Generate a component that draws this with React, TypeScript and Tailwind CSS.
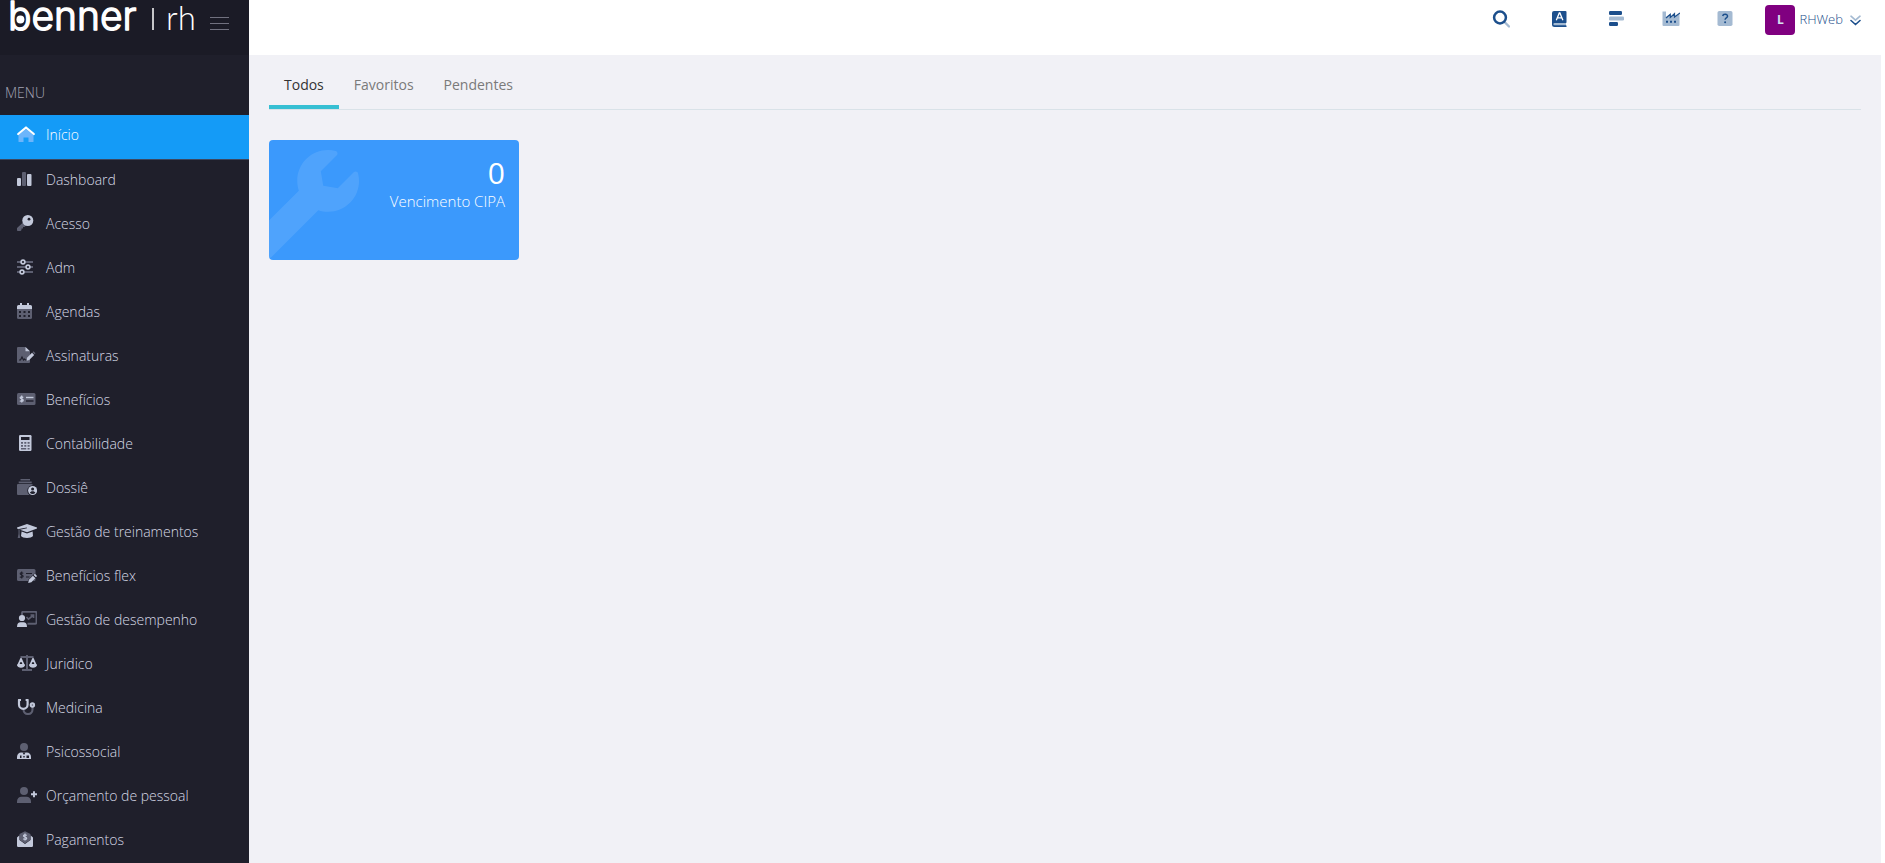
import React from 'react';
import { FaWrench } from 'react-icons/fa';

const LIGHT = '#c3c9db';
const DIM = '#5d5f71';
const DARK = '#1f1f2b';
const NAVY = '#1c4f8c';
const STEEL = '#a4bad2';

const MenuIcon = ({ children }: { children: React.ReactNode }) => (
  <svg className="h-4 w-5 shrink-0" viewBox="0 0 20 16" fill="none" aria-hidden="true">
    {children}
  </svg>
);

const menuItems = [
  {
    label: 'Início',
    icon: (
      <>
        <path d="M1.5 9 9 3l7.500 6v6.500a.5.500 0 0 1-.5.500h-4.500v-4.500h-5V16H2a.5.500 0 0 1-.5-.5z" fill="#6cb5fb" />
        <path d="M1.200 8 9 1.500 16.800 8" stroke="#fff" strokeWidth="2.200" strokeLinecap="round" strokeLinejoin="round" />
      </>
    ),
  },
  {
    label: 'Dashboard',
    icon: (
      <>
        <rect x="0" y="7" width="4" height="8" rx="1" fill={LIGHT} />
        <rect x="5" y="1" width="4" height="14" rx="1" fill={DIM} />
        <rect x="10" y="3" width="4.500" height="12" rx="1" fill={LIGHT} />
      </>
    ),
  },
  {
    label: 'Acesso',
    icon: (
      <>
        <path d="M6 7.500 9 10.500 7.500 12H6v1.500H4.500V15L3.500 16H.8a.8.800 0 0 1-.8-.8v-2.200z" fill={DIM} />
        <circle cx="10.800" cy="5.500" r="5.500" fill={LIGHT} />
        <circle cx="12" cy="4.200" r="1.400" fill={DARK} />
      </>
    ),
  },
  {
    label: 'Adm',
    icon: (
      <>
        <path d="M0 3h16M0 8h16M0 13h16" stroke={DIM} strokeWidth="2" />
        <g fill={DARK} stroke={LIGHT} strokeWidth="1.600">
          <circle cx="6" cy="3" r="1.900" />
          <circle cx="11" cy="8" r="1.900" />
          <circle cx="5" cy="13" r="1.900" />
        </g>
      </>
    ),
  },
  {
    label: 'Agendas',
    icon: (
      <>
        <path d="M0 6h15v8.500a1.500 1.500 0 0 1-1.500 1.500h-12A1.500 1.500 0 0 1 0 14.500z" fill={DIM} />
        <path d="M0 6V3.500A1.500 1.500 0 0 1 1.500 2H3V0h2v2h5V0h2v2h1.500A1.500 1.500 0 0 1 15 3.500V6z" fill={LIGHT} />
        <path d="M2 8h2v2H2zM6.500 8h2v2h-2zM11 8h2v2h-2zM2 12h2v2H2zM6.500 12h2v2h-2zM11 12h2v2h-2z" fill={DARK} />
      </>
    ),
  },
  {
    label: 'Assinaturas',
    icon: (
      <>
        <path d="M1 0h7.500L13 4.500V15a1 1 0 0 1-1 1H1a1 1 0 0 1-1-1V1a1 1 0 0 1 1-1z" fill={DIM} />
        <path d="M8.500 0 13 4.200H8.500z" fill={LIGHT} />
        <path d="M2 13h1.500l1.500-3 1.500 3 1-1 1 1H10" stroke={DARK} strokeWidth="1.200" />
        <path d="m9.500 13.800.5-3 5-5 2.200 2.200-5 5z" fill={LIGHT} />
        <path d="m15.500 5.200 1-1 2 2-1 1z" fill={DIM} />
      </>
    ),
  },
  {
    label: 'Benefícios',
    icon: (
      <>
        <rect x="0" y="2" width="18.500" height="12" rx="1.500" fill={DIM} />
        <path d="M6.300 6.400C4.800 5.300 3 5.800 3.200 7c.2 1.200 3 .8 3 2.200 0 1.200-2 1.500-3.400.5M4.700 4.500v7" stroke={LIGHT} strokeWidth="1.300" />
        <path d="M9 6.500h7.500" stroke={LIGHT} strokeWidth="1.400" />
        <path d="M9 10h7.500" stroke={DARK} strokeWidth="1.400" />
      </>
    ),
  },
  {
    label: 'Contabilidade',
    icon: (
      <>
        <rect x="2" y="0" width="12.500" height="16" rx="1.200" fill={LIGHT} />
        <path d="M4 2h8.500v3H4z" fill={DARK} />
        <path d="M4 7h2v1.700H4zM7.300 7h2v1.700h-2zM10.600 7h2v1.700h-2zM4 10h2v1.700H4zM7.300 10h2v1.700h-2zM10.600 10h2v1.700h-2zM4 13h5.200v1.500H4zM10.600 13h2v1.500h-2z" fill={DIM} />
      </>
    ),
  },
  {
    label: 'Dossiê',
    icon: (
      <>
        <path d="M3.500 0h9.500v1.600H3.500zM1.700 2.500h13v1.700h-13zM1 5h14.500v11H1a1 1 0 0 1-1-1V6a1 1 0 0 1 1-1z" fill={DIM} />
        <circle cx="15.600" cy="11.500" r="5.300" fill={DARK} />
        <circle cx="15.600" cy="11.500" r="4.500" fill={LIGHT} />
        <circle cx="15.600" cy="10" r="1.500" fill={DARK} />
        <path d="M12.900 13.800c.2-2.200 5.200-2.200 5.400 0-1.500 1.600-3.900 1.600-5.400 0z" fill={DARK} />
      </>
    ),
  },
  {
    label: 'Gestão de treinamentos',
    icon: (
      <>
        <path d="M1.500 6v5L.7 15h2.500l-.6-4V6.500" fill={DIM} />
        <path d="m4.600 8.500 5.400 2 5.600-2L16 13c-1.500 2.600-10.500 2.600-12 0z" fill={LIGHT} />
        <path d="M10 1 20 4.600v.8L10 9.300 3 6.700l7-1.500-.2-.7L1.700 6.100 0 5.400v-.8z" fill={LIGHT} />
      </>
    ),
  },
  {
    label: 'Benefícios flex',
    icon: (
      <>
        <rect x="0" y="2" width="18.500" height="12" rx="1.500" fill={DIM} />
        <path d="M6.300 6.400C4.800 5.300 3 5.800 3.200 7c.2 1.200 3 .8 3 2.200 0 1.200-2 1.500-3.400.5M4.700 4.500v7" stroke={DARK} strokeWidth="1.100" />
        <path d="M9 6.500h6M9 10h3.500" stroke={DARK} strokeWidth="1.200" />
        <path d="m10.800 16.200.7-3.700 6-6 2.900 2.900-6 6z" fill={DARK} />
        <path d="m11.200 16 .7-3.300 4-4 2.500 2.500-4 4zM16.600 8l1.300-1.300 2.100 2.300-1 1.200z" fill={LIGHT} />
      </>
    ),
  },
  {
    label: 'Gestão de desempenho',
    icon: (
      <>
        <path d="M5 4V2a1.300 1.300 0 0 1 1.300-1.300h12A1.300 1.300 0 0 1 19.500 2v9.500a1.300 1.300 0 0 1-1.300 1.300H10.500" stroke={DIM} strokeWidth="1.900" />
        <path d="m9.500 6 2 2.200L16 4.500M13.500 4H16.500v3" stroke={DIM} strokeWidth="1.700" />
        <circle cx="5" cy="7" r="3.100" fill={LIGHT} />
        <path d="M0 16c0-3.400 1.600-4.800 3.500-4.800h3c2 0 3.500 1.400 3.500 4.800z" fill={LIGHT} />
      </>
    ),
  },
  {
    label: 'Juridico',
    icon: (
      <>
        <path d="M3.500 2h13M10 0v15M5 15h10" stroke={DIM} strokeWidth="2" />
        <path d="M4 3.800 1.200 10h5.600zM16 3.800 13.200 10h5.600z" stroke={LIGHT} strokeWidth="1.800" strokeLinejoin="round" />
        <path d="M0 9.500h8c0 4.300-8 4.300-8 0zM12 9.500h8c0 4.300-8 4.300-8 0z" fill={LIGHT} />
      </>
    ),
  },
  {
    label: 'Medicina',
    icon: (
      <>
        <path d="M6.500 10.500c0 6 9 6 9 0V8" stroke={DIM} strokeWidth="2.100" />
        <path d="M4 1H2v4.500a4.300 4.300 0 0 0 8.600 0V1h-2" stroke={LIGHT} strokeWidth="2.200" strokeLinejoin="round" />
        <circle cx="15.400" cy="6" r="2.700" fill={LIGHT} />
        <circle cx="15.400" cy="6" r=".8" fill={DIM} />
      </>
    ),
  },
  {
    label: 'Psicossocial',
    icon: (
      <>
        <circle cx="7" cy="4" r="4" fill={DIM} />
        <path d="M0 16v-2c0-3 2-4.500 4-4.500h6c2 0 4 1.500 4 4.500v2z" fill={LIGHT} />
        <path d="M5.500 9.500h3L7 12zM3 12.500h1.500V15H3zM9.500 12.500H12V15H9.500zM6.300 13h1.400v1.500H6.300z" fill={DARK} />
      </>
    ),
  },
  {
    label: 'Orçamento de pessoal',
    icon: (
      <>
        <circle cx="7" cy="4" r="4" fill={DIM} />
        <path d="M0 16v-1.500c0-3 2-4.700 4.500-4.700h5c2.500 0 4.500 1.700 4.500 4.700V16z" fill={DIM} />
        <path d="M17 4.300v6M14 7.300h6" stroke={LIGHT} strokeWidth="1.900" />
      </>
    ),
  },
  {
    label: 'Pagamentos',
    icon: (
      <>
        <path d="M0 6.500 2.500 4.300V9L8 13l5.500-4V4.300L16 6.500v8.300a1.200 1.200 0 0 1-1.200 1.200H1.200A1.200 1.200 0 0 1 0 14.800z" fill={LIGHT} />
        <path d="M2.500 3v5.800L8 12.500l5.500-3.700V3L8 .3z" fill={DIM} />
        <path d="M9.700 4.500C8.200 3.300 6.300 4 6.500 5c.3 1.200 3.200.8 3.200 2.300 0 1.200-2 1.500-3.500.5M8 2.500v7" stroke={LIGHT} strokeWidth="1.200" />
      </>
    ),
  },
];

const toolbar = [
  {
    label: 'Pesquisar',
    width: 'w-[58px]',
    icon: (
      <>
        <path d="m13 12.500 4 4" stroke={STEEL} strokeWidth="2.400" strokeLinecap="round" />
        <circle cx="8" cy="7.500" r="5.900" stroke={NAVY} strokeWidth="2.500" />
      </>
    ),
  },
  {
    label: 'Manual',
    width: 'w-[58px]',
    icon: (
      <>
        <path d="M4 1h11.500a1 1 0 0 1 1 1v10.500l-.5.500v2.500h.5V17H4.500A2.500 2.500 0 0 1 2 14.500V3a2 2 0 0 1 2-2z" fill={NAVY} />
        <path d="M4.500 13H16v2.300H4.500a1.100 1.100 0 0 1 0-2.300z" fill={STEEL} />
        <path d="m6.300 10.200 3-7.200h.6l3 7.200M7.300 7.900h4.600" stroke="#fff" strokeWidth="1.300" />
      </>
    ),
  },
  {
    label: 'Tarefas',
    width: 'w-[56px]',
    icon: (
      <>
        <rect x="2" y="1" width="13" height="4" rx="1.200" fill={NAVY} />
        <rect x="2" y="6.500" width="15" height="4" rx="1.200" fill={STEEL} />
        <rect x="2" y="12" width="9" height="4" rx="1.200" fill={NAVY} />
      </>
    ),
  },
  {
    label: 'Indicadores',
    width: 'w-[54px]',
    icon: (
      <>
        <path d="M.5 1.500h3.500v5.500L8 4v3.500l4.500-3.500v3L17.500 4v11a1 1 0 0 1-1 1h-15a1 1 0 0 1-1-1z" fill={STEEL} />
        <path d="M4 8 8.300 4.300V7.500L12.500 3.700V7L18 3" stroke={NAVY} strokeWidth="1.200" />
        <path d="M4 10.800h2v2H4zM8 10.800h2v2H8zM12 10.800h2v2h-2z" fill={NAVY} />
      </>
    ),
  },
  {
    label: 'Ajuda',
    width: 'w-[54px]',
    icon: (
      <>
        <rect x="1.500" y="1" width="15" height="15" rx="1.800" fill={STEEL} />
        <path d="M6.700 6c.5-2.600 5-2.300 4.800.3-.2 1.700-2.400 1.500-2.400 3.400" stroke={NAVY} strokeWidth="1.500" />
        <circle cx="9.100" cy="12.300" r="1" fill={NAVY} />
      </>
    ),
  },
];

const tabs = ['Todos', 'Favoritos', 'Pendentes'];

const Logo = () => (
  <svg className="h-10 w-[200px]" viewBox="0 0 200 40" role="img" aria-label="benner | rh">
    <text
      x="8"
      y="30"
      fill="#fff"
      stroke="#fff"
      strokeWidth="1.400"
      strokeLinejoin="round"
      fontFamily="Inter, sans-serif"
      fontWeight="300"
      fontSize="39"
    >
      benner
    </text>
    <circle cx="20.400" cy="19.500" r="4" fill="#fff" />
    <path d="M153 8v22" stroke="#fff" strokeWidth="1.500" />
    <text x="166" y="30" fill="#fff" fontFamily="Lato, sans-serif" fontSize="33" fontWeight="300">
      rh
    </text>
  </svg>
);

const Sidebar = () => (
  <aside className="flex h-screen w-[249px] shrink-0 flex-col overflow-hidden bg-[#1f1f2b]">
    <div className="flex h-[55px] shrink-0 items-start bg-[#1b1b26]">
      <Logo />
      <button type="button" aria-label="Recolher menu" className="mt-[17px] ml-[10px] flex flex-col gap-[5px]">
        <span className="h-px w-[19px] bg-[#71717f]"></span>
        <span className="h-px w-[19px] bg-[#71717f]"></span>
        <span className="h-px w-[19px] bg-[#71717f]"></span>
      </button>
    </div>
    <h2 className="mt-7 mb-3 shrink-0 pl-[5px] text-sm font-light text-[#a3a3b5]">MENU</h2>
    <nav>
      {menuItems.map((item, index) => (
        <a
          key={item.label}
          href="#"
          className={
            index === 0
              ? 'flex h-[45px] items-start gap-[9px] border-b border-[#3c4760] bg-[#149bf7] pt-[11px] pl-[17px] text-white'
              : 'flex h-11 items-start gap-[9px] pt-[11px] pl-[17px] text-[#d6d9e6]'
          }
        >
          <MenuIcon>{item.icon}</MenuIcon>
          <span className="text-sm leading-[18px] font-light whitespace-nowrap">{item.label}</span>
        </a>
      ))}
    </nav>
  </aside>
);

const Header = () => (
  <header className="flex h-[55px] shrink-0 items-start justify-end bg-white pt-[5px] pr-6">
    {toolbar.map((tool) => (
      <button key={tool.label} type="button" aria-label={tool.label} className={`flex justify-center pt-[5px] ${tool.width}`}>
        <svg className="size-[18px]" viewBox="0 0 18 18" fill="none" aria-hidden="true">
          {tool.icon}
        </svg>
      </button>
    ))}
    <button type="button" className="ml-[13px] flex items-center">
      <span className="flex size-[30px] items-center justify-center rounded bg-[#800080] text-xs font-bold text-[#d5e2f0]">L</span>
      <span className="ml-1 text-[13px] font-light text-[#1c4f8c]">RHWeb</span>
      <svg className="ml-[7px] size-[11px]" viewBox="0 0 11 11" fill="none" aria-hidden="true">
        <path d="m1 1.200 4.500 4 4.500-4" stroke={STEEL} strokeWidth="1.600" strokeLinecap="round" />
        <path d="m1 5.500 4.500 4 4.500-4" stroke={NAVY} strokeWidth="1.600" strokeLinecap="round" />
      </svg>
    </button>
  </header>
);

const App = () => {
  return (
    <div className="flex h-screen bg-white font-['Open_Sans',sans-serif]">
      <Sidebar />
      <div className="flex min-w-0 flex-1 flex-col">
        <Header />
        <main className="mr-1 flex-1 bg-[#f1f1f6] px-5 pt-[15px]">
          {/* Tabs */}
          <div role="tablist" className="flex h-10 border-b border-[#d9e2e8]">
            {tabs.map((tab, index) => (
              <button
                key={tab}
                type="button"
                role="tab"
                aria-selected={index === 0}
                className={
                  index === 0
                    ? 'border-b-4 border-[#36bfd3] px-[15px] pb-[6px] text-sm text-[#333]'
                    : 'border-b-4 border-transparent px-[15px] pb-[6px] text-sm text-[#7a7a7a]'
                }
              >
                {tab}
              </button>
            ))}
          </div>

          {/* Cards */}
          <a href="#" className="relative mt-[30px] flex h-[120px] w-[250px] flex-col items-end overflow-hidden rounded-sm bg-[#3b99fc] pt-[15px] pr-[14px] text-white">
            <FaWrench className="absolute top-[10px] -left-[20px] size-[110px] opacity-10" aria-hidden="true" />
            <span className="text-[30px] leading-9">0</span>
            <span className="text-[15px] leading-5 font-light">Vencimento CIPA</span>
          </a>
        </main>
      </div>
    </div>
  );
};

export default App;
